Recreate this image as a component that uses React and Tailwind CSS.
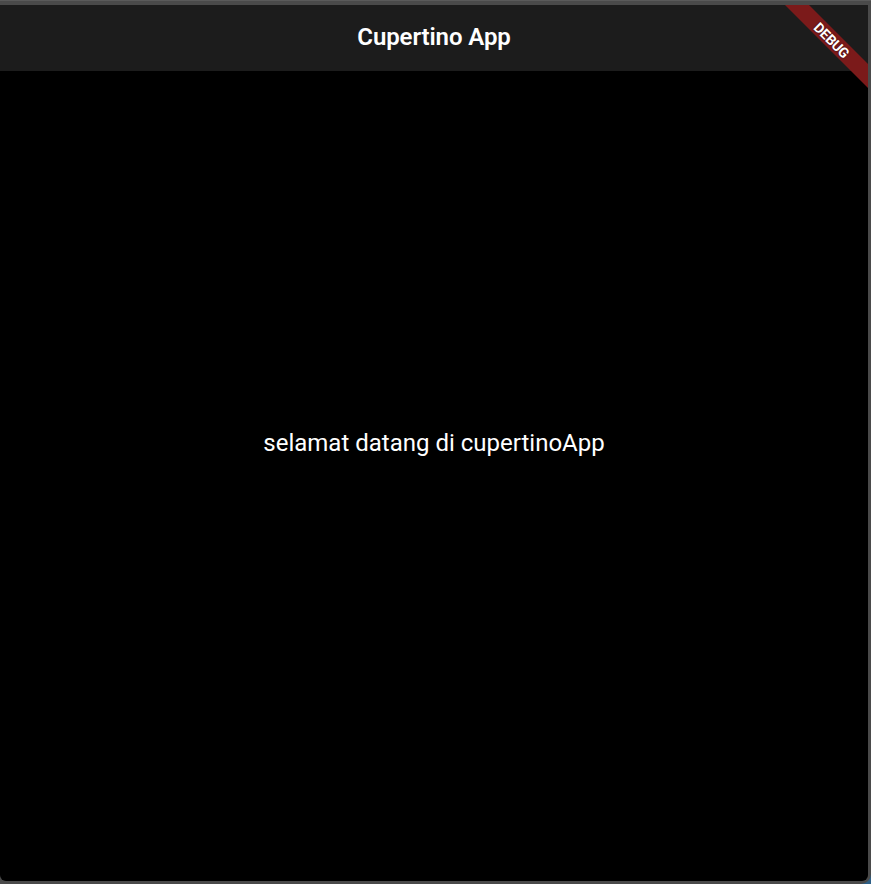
import React from 'react';

function DebugBanner() {
  return (
    <div className="absolute top-[35px] right-[36px] w-0 h-0 pointer-events-none">
      <div className="absolute left-0 top-0 -translate-x-1/2 -translate-y-1/2 rotate-45 w-[170px] h-[17px] bg-[#7b1a1a] flex items-center justify-center">
        <span className="text-[14px] font-bold text-white leading-none tracking-[-0.3px] [text-shadow:0_0_2px_rgba(0,0,0,0.6)]">
          DEBUG
        </span>
      </div>
    </div>
  );
}

export default function App() {
  return (
    <div className="w-[871px] h-[884px] bg-[#2d5f86] font-['Roboto',sans-serif]">
      <div className="w-full h-full bg-[#4a4a4a] pt-[4px] pr-[3px] pb-[3px] rounded-br-[10px] border-t border-[#5a5a5a]">
        <div className="relative w-full h-full bg-black overflow-hidden rounded-b-[6px]">
          <div className="absolute inset-0 flex items-center justify-center">
            <p className="text-[24px] text-white">selamat datang di cupertinoApp</p>
          </div>
          <div className="absolute top-0 left-0 right-0 h-[66px] bg-[#1c1c1c] flex items-center justify-center pb-[2px]">
            <h1 className="text-[24px] font-semibold text-white tracking-[-0.1px]">Cupertino App</h1>
          </div>
          <DebugBanner />
        </div>
      </div>
    </div>
  );
}
